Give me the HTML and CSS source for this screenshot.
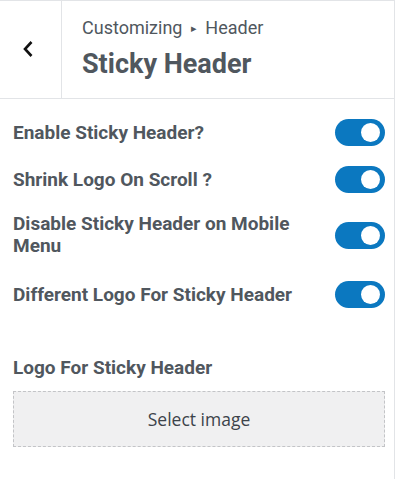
FILE: index.html
```html
<!DOCTYPE html>
<html>
<head>
<meta charset="utf-8">
<link rel="stylesheet" href="styles.css">
</head>
<body>
<div class="panel">
  <div class="head">
    <button class="back" aria-label="Back">
      <svg width="12" height="18" viewBox="0 0 12 18"><path d="M9.5 2 L3 9 L9.5 16" fill="none" stroke="#111" stroke-width="2.6" stroke-linejoin="miter"/></svg>
    </button>
    <div class="titles">
      <div class="crumb">Customizing <span class="tri">▸</span> Header</div>
      <div class="title">Sticky Header</div>
    </div>
  </div>
  <div class="body">
    <div class="row">
      <div class="label">Enable Sticky Header?</div>
      <div class="toggle"><span class="knob"></span></div>
    </div>
    <div class="row">
      <div class="label">Shrink Logo On Scroll ?</div>
      <div class="toggle"><span class="knob"></span></div>
    </div>
    <div class="row row-tall">
      <div class="label">Disable Sticky Header on Mobile Menu</div>
      <div class="toggle"><span class="knob"></span></div>
    </div>
    <div class="row">
      <div class="label">Different Logo For Sticky Header</div>
      <div class="toggle"><span class="knob"></span></div>
    </div>
    <div class="media">
      <div class="label">Logo For Sticky Header</div>
      <div class="select">Select image</div>
    </div>
  </div>
</div>
</body>
</html>
```
FILE: styles.css
```css
html, body { margin: 0; padding: 0; background: #fff; }
body { font-family: Roboto, "Liberation Sans", sans-serif; color: #50575e; }
.panel { width: 394px; height: 479px; border-right: 1px solid #e2e4e7; box-sizing: content-box; }
.head { display: flex; height: 97px; border-top: 1px solid #e2e4e7; border-bottom: 1px solid #e2e4e7; }
.back { width: 62px; border: 0; border-right: 1px solid #e2e4e7; background: #fff; display: flex; align-items: center; justify-content: center; padding: 0 6px 2px 0; }
.titles { padding-left: 20px; padding-top: 15px; }
.crumb { font-size: 18px; line-height: 24px; color: #50575e; }
.tri { font-size: 11px; vertical-align: 2px; margin: 0 4px; }
.title { font-size: 27px; font-weight: 700; line-height: 34px; margin-top: 6px; color: #50575e; }
.body { padding: 20px 9px 0 13px; }
.row { display: flex; align-items: center; justify-content: space-between; margin-bottom: 20px; }
.row-tall { margin-bottom: 24px; }
.label { font-size: 19px; font-weight: 700; line-height: 22px; max-width: 300px; }
.toggle { width: 50px; height: 27px; border-radius: 14px; background: #0b78c0; position: relative; flex: none; }
.knob { position: absolute; right: 5px; top: 4px; width: 19px; height: 19px; border-radius: 50%; background: #fff; }
.media { margin-top: 49px; }
.select { margin-top: 12px; height: 54px; border: 1px dashed #c3c4c7; background: #f0f0f1; display: flex; align-items: center; justify-content: center; font-family: "Open Sans", sans-serif; font-size: 17.5px; color: #3c434a; }
```
